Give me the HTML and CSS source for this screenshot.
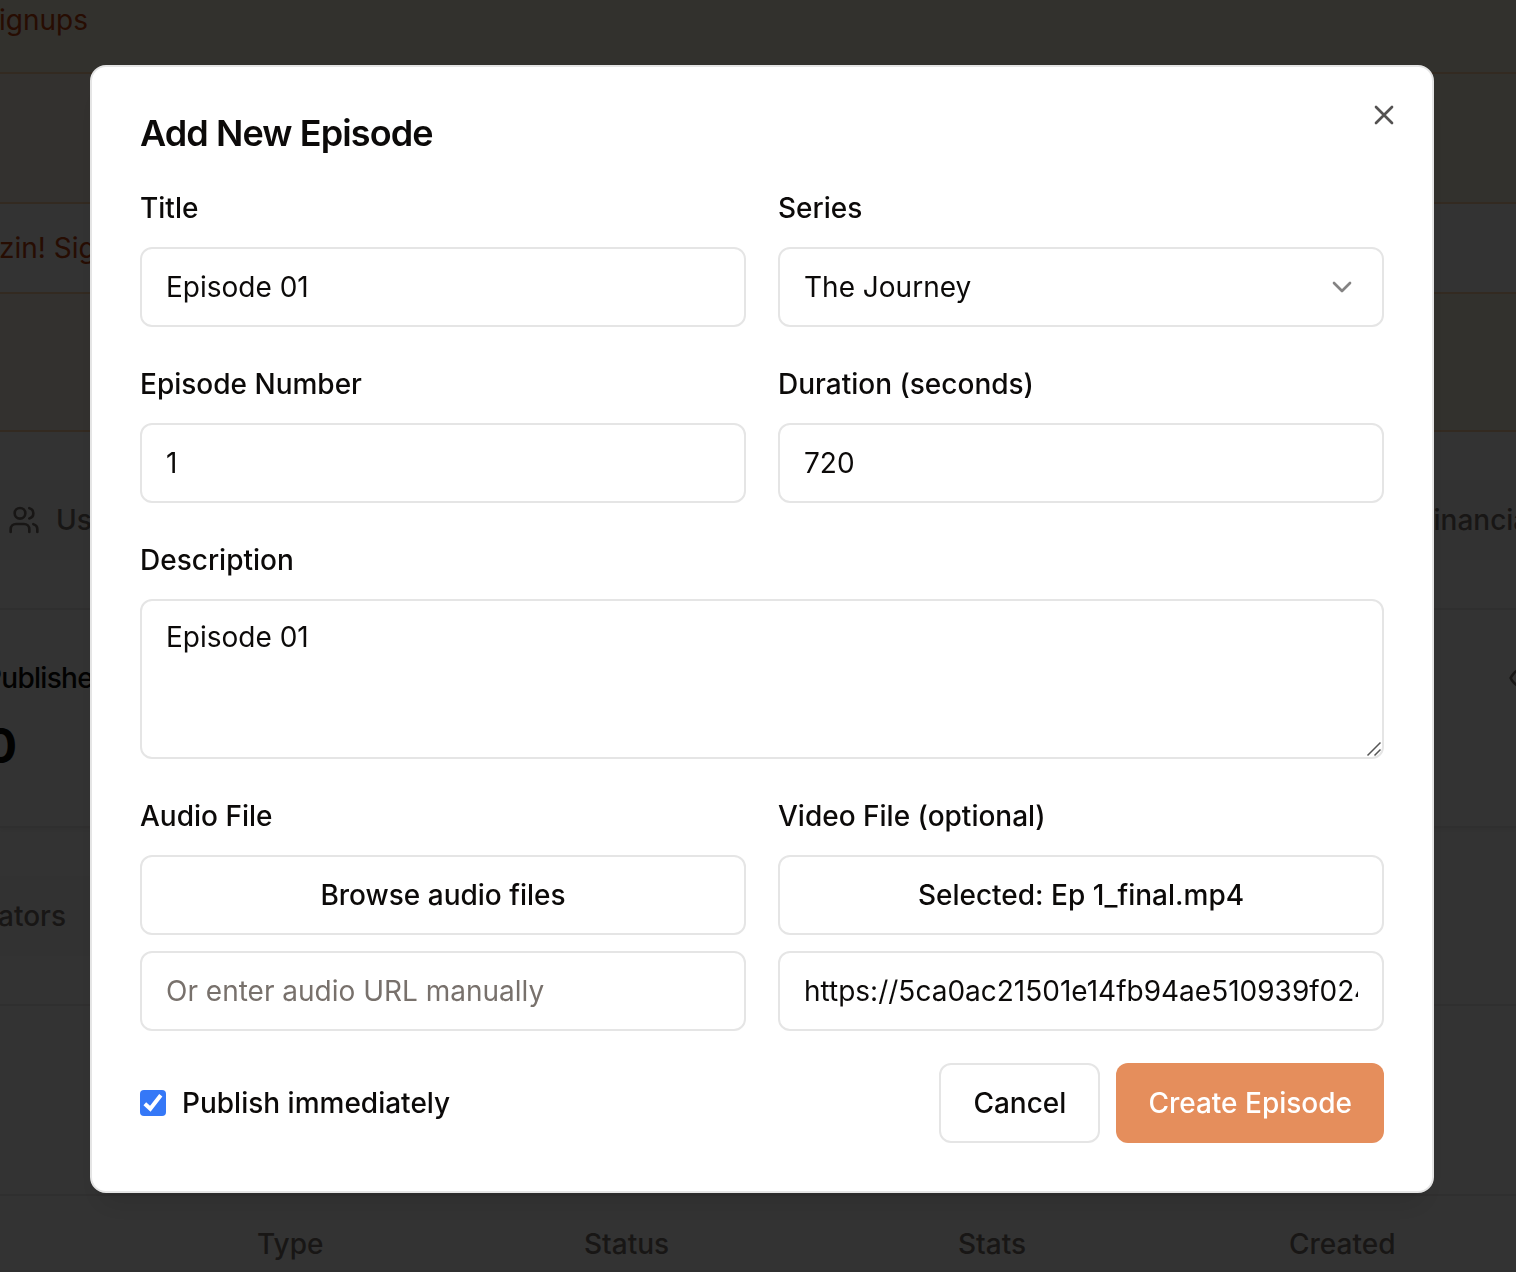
FILE: index.html
```html
<!DOCTYPE html>
<html lang="en">
<head>
<meta charset="utf-8">
<title>Add New Episode</title>
<link rel="stylesheet" href="styles.css">
</head>
<body>
<main class="page">
  <section class="notice notice-top"><span>Signups</span></section>
  <section class="notice notice-space"></section>
  <section class="notice-row">zin! Signups</section>
  <section class="notice notice-end"></section>
  <nav class="tabs">
    <div class="tab-list">
      <span class="tab">
        <svg class="icon" viewBox="0 0 24 24"><path d="M16 21v-2a4 4 0 0 0-4-4H6a4 4 0 0 0-4 4v2"/><circle cx="9" cy="7" r="4"/><path d="M22 21v-2a4 4 0 0 0-3-3.87"/><path d="M16 3.13a4 4 0 0 1 0 7.75"/></svg>
        Users
      </span>
      <span class="tab tab-financial">Financials</span>
    </div>
  </nav>
  <section class="stats">
    <div class="stat-head">
      <span class="stat-label">Published</span>
      <svg class="icon icon-eye" viewBox="0 0 24 24"><path d="M2 12s3-7 10-7 10 7 10 7-3 7-10 7-10-7-10-7Z"/><circle cx="12" cy="12" r="3"/></svg>
    </div>
    <div class="stat-value"><span>0</span></div>
  </section>
  <nav class="subtabs"><div class="subtab-list"><span>Creators</span></div></nav>
  <section class="toolbar"></section>
  <div class="table-head"><span>Type</span><span>Status</span><span>Stats</span><span>Created</span></div>
</main>

<div class="overlay">
  <form class="dialog">
    <h2 class="dialog-title">Add New Episode</h2>
    <button class="close" type="button" aria-label="Close"><svg class="icon" viewBox="0 0 24 24"><path d="M18 6 6 18M6 6l12 12"/></svg></button>
    <div class="row">
      <div class="field">
        <div class="label"><label>Title</label></div>
        <input class="control" type="text" value="Episode 01">
      </div>
      <div class="field">
        <div class="label"><label>Series</label></div>
        <button class="control select" type="button"><span>The Journey</span><svg class="icon chevron" viewBox="0 0 24 24"><path d="m6 9 6 6 6-6"/></svg></button>
      </div>
    </div>
    <div class="row">
      <div class="field">
        <div class="label"><label>Episode Number</label></div>
        <input class="control" type="text" value="1">
      </div>
      <div class="field">
        <div class="label"><label>Duration (seconds)</label></div>
        <input class="control" type="text" value="720">
      </div>
    </div>
    <div class="field">
      <div class="label"><label>Description</label></div>
      <div class="area-wrap">
        <textarea class="control area">Episode 01</textarea>
        <svg class="grip" viewBox="0 0 16 16"><path d="M1.5 14.5 14.5 1.5M8.5 14.5l6-6"/></svg>
      </div>
    </div>
    <div class="row">
      <div class="field">
        <div class="label"><label>Audio File</label></div>
        <button class="control btn" type="button">Browse audio files</button>
        <input class="control" type="text" placeholder="Or enter audio URL manually">
      </div>
      <div class="field">
        <div class="label"><label>Video File (optional)</label></div>
        <button class="control btn" type="button">Selected: Ep 1_final.mp4</button>
        <input class="control" type="text" value="https://5ca0ac21501e14fb94ae510939f024">
      </div>
    </div>
    <div class="footer">
      <label class="check">
        <svg class="checkbox" viewBox="0 0 26 26"><rect width="26" height="26" rx="4"/><path d="M4.8 13.8 10.3 18.8 20.8 5.2"/></svg>
        Publish immediately
      </label>
      <div class="actions">
        <button class="control btn cancel" type="button">Cancel</button>
        <button class="control btn primary" type="button">Create Episode</button>
      </div>
    </div>
  </form>
</div>
</body>
</html>
```
FILE: styles.css
```css
* { box-sizing: border-box; }
body {
  margin: 0;
  height: 1272px;
  overflow: hidden;
  font-family: Inter, "Liberation Sans", sans-serif;
  font-size: 28px;
  line-height: 40px;
  color: #0c0a09;
  background: #fff;
}
.icon {
  width: 32px;
  height: 32px;
  flex: none;
  fill: none;
  stroke: currentColor;
  stroke-width: 2;
  stroke-linecap: round;
  stroke-linejoin: round;
}

/* Dashboard behind the dialog */
.page { width: 1516px; height: 1272px; overflow: hidden; background: #fdfdfd; white-space: nowrap; }
.notice { background: linear-gradient(90deg, #fdf5ea, #f8f2e0); border-bottom: 2px solid #ffcfa3; color: #c2410c; }
.notice-top { height: 74px; background: linear-gradient(90deg, #fbf2e2, #faf2e0); }
.notice-top span { display: flex; justify-content: flex-end; width: 88px; }
.notice-space { height: 130px; }
.notice-row { height: 90px; padding-top: 24px; border-bottom: 2px solid #ffcfa3; color: #c2410c; text-indent: -1px; }
.notice-end { height: 138px; }
.tabs { height: 178px; padding-top: 48px; border-bottom: 2px solid #eceae9; }
.tab-list { display: flex; height: 80px; align-items: center; padding-left: 8px; background: #f9f9f9; color: #78716c; font-weight: 500; }
.tab { display: flex; flex: none; gap: 16px; align-items: center; width: 1409px; }
.tab-financial { width: auto; }
.stats { height: 218px; padding-top: 48px; border-bottom: 2px solid #eceae9; box-shadow: 0 2px 4px rgba(0, 0, 0, .05); }
.stat-head { display: flex; justify-content: space-between; height: 40px; align-items: center; margin-right: -24px; color: #0c0a09; }
.stat-label { margin-left: -16px; font-weight: 500; letter-spacing: -0.7px; }
.icon-eye { color: #78716c; }
.stat-value { display: flex; justify-content: flex-end; width: 17px; padding-top: 16px; font-size: 48px; line-height: 64px; font-weight: 700; }
.subtabs { height: 178px; padding-top: 48px; border-bottom: 2px solid #eceae9; }
.subtab-list { display: flex; justify-content: flex-end; align-items: center; width: 90px; height: 80px; padding-right: 24px; background: #f9f9f9; color: #78716c; font-weight: 500; }
.toolbar { height: 190px; border-bottom: 2px solid #eceae9; }
.table-head { display: grid; grid-template-columns: 327px 374px 331px auto; height: 76px; padding: 28px 0 0 257px; border-bottom: 2px solid #eceae9; color: #78716c; font-weight: 500; }

/* Dialog */
.overlay {
  position: fixed;
  inset: 0;
  display: flex;
  justify-content: center;
  align-items: flex-start;
  padding: 65px 0 0 8px;
  background: rgba(0, 0, 0, .8);
}
.dialog {
  position: relative;
  display: grid;
  gap: 32px;
  width: 1344px;
  padding: 48px;
  border: 2px solid #e5e5e5;
  border-radius: 16px;
  background: #fff;
  box-shadow: 0 20px 30px -6px rgba(0, 0, 0, .1), 0 8px 12px -8px rgba(0, 0, 0, .1);
}
.dialog-title { margin: 0; font-size: 36px; line-height: 36px; font-weight: 600; letter-spacing: -0.9px; }
.close { position: absolute; top: 32px; right: 32px; display: flex; padding: 0; border: 0; background: none; color: #0c0a09; opacity: .7; }
.row { display: grid; grid-template-columns: 1fr 1fr; gap: 32px; }
.field { display: grid; gap: 16px; min-width: 0; }
.label { height: 48px; font-size: 32px; line-height: 48px; font-weight: 500; }
.label label { font-size: 28px; line-height: 28px; }
.control {
  display: block;
  width: 100%;
  height: 80px;
  margin: 0;
  padding: 0 24px;
  border: 2px solid #e5e5e5;
  border-radius: 12px;
  background: #fff;
  color: #0c0a09;
  font: inherit;
  outline: none;
}
.control::placeholder { color: #78716c; opacity: 1; }
.select { display: flex; align-items: center; justify-content: space-between; }
.chevron { opacity: .5; }
.area-wrap { position: relative; }
.area { height: 160px; padding: 16px 24px; resize: none; }
.grip { position: absolute; right: 2px; bottom: 2px; width: 16px; height: 16px; fill: none; stroke: #555; stroke-width: 1.5; }
.btn { font-weight: 500; text-align: center; }
.footer { display: flex; justify-content: space-between; align-items: center; }
.check { display: flex; align-items: center; gap: 16px; font-weight: 500; }
.checkbox { width: 26px; height: 26px; }
.checkbox rect { fill: #3578f7; }
.checkbox path { fill: none; stroke: #fff; stroke-width: 4; }
.actions { display: flex; gap: 16px; }
.actions .btn { width: auto; padding: 0 32px; }
.actions .primary { border: 0; background: #e58e5c; color: #fff; }
```
